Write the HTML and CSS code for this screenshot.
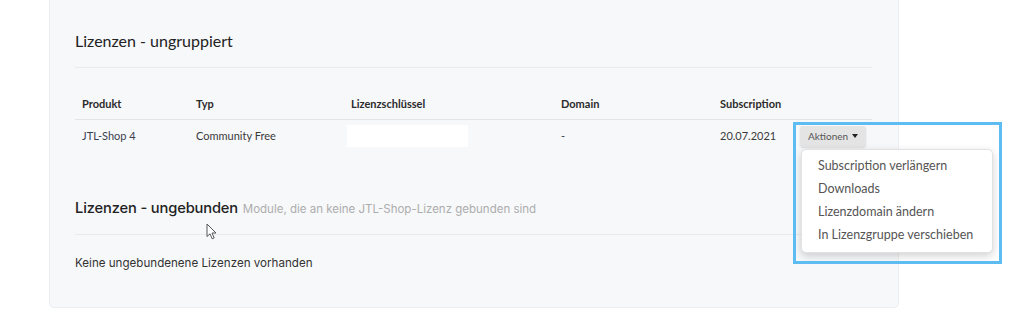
FILE: index.html
```html
<!DOCTYPE html>
<html lang="de">
<head>
<meta charset="utf-8">
<link rel="stylesheet" href="styles.css">
</head>
<body>
<div class="card">
  <section class="section">
    <h2 class="heading">Lizenzen - ungruppiert</h2>
    <table class="lic-table">
      <colgroup>
        <col class="c1"><col class="c2"><col class="c3"><col class="c4"><col class="c5"><col class="c6">
      </colgroup>
      <thead>
        <tr><th>Produkt</th><th>Typ</th><th>Lizenzschlüssel</th><th>Domain</th><th>Subscription</th><th></th></tr>
      </thead>
      <tbody>
        <tr>
          <td class="product">JTL-Shop 4</td>
          <td>Community Free</td>
          <td><span class="keybox"></span></td>
          <td>-</td>
          <td>20.07.2021</td>
          <td class="actions-cell">
            <div class="actions">
              <button class="btn-actions">Aktionen <span class="caret"></span></button>
              <ul class="dropdown">
                <li>Subscription verlängern</li>
                <li>Downloads</li>
                <li>Lizenzdomain ändern</li>
                <li>In Lizenzgruppe verschieben</li>
              </ul>
              <div class="highlight"></div>
            </div>
          </td>
        </tr>
      </tbody>
    </table>
  </section>
  <section class="section second">
    <h2 class="heading h-inter">Lizenzen - ungebunden <small class="sub">Module, die an keine JTL-Shop-Lizenz gebunden sind</small></h2>
    <p class="empty">Keine ungebundenene Lizenzen vorhanden</p>
    <svg class="cursor" width="12" height="18" viewBox="0 0 12 18"><path d="M1 1 L1 13.5 L4 10.8 L6.2 15.8 L8.2 14.9 L6 10 L10 10 Z" fill="#fff" stroke="#555" stroke-width="1" stroke-linejoin="round"/></svg>
  </section>
</div>
</body>
</html>
```

FILE: styles.css
```css
* { box-sizing: border-box; }
html, body { margin: 0; padding: 0; background: #fff; }
body { font-family: Lato, "Open Sans", sans-serif; color: #333; width: 1024px; height: 320px; overflow: hidden; }

.card {
  margin-left: 49px;
  width: 850px;
  height: 308px;
  background: #f7f8fa;
  border: 1px solid #ebedf0;
  border-top: none;
  border-radius: 0 0 5px 5px;
  padding: 0 26px 0 25px;
}

.section { position: relative; }

.heading {
  margin: 0;
  padding-top: 31px;
  padding-bottom: 16px;
  height: 68px;
  font-size: 16px;
  font-weight: 400;
  color: #222;
  line-height: 20px;
  border-bottom: 1px solid #e9ebee;
}

.lic-table {
  margin-top: 20px;
  width: 100%;
  border-collapse: collapse;
  table-layout: fixed;
  font-size: 11px;
}
.c1 { width: 114px; }
.c2 { width: 155px; }
.c3 { width: 210px; }
.c4 { width: 159px; }
.c5 { width: 80px; }

.lic-table th {
  text-align: left;
  font-weight: 700;
  color: #2b2b2b;
  padding: 9px 7px 8px;
  line-height: 14px;
  border-bottom: 1px solid #e3e5e8;
}
.lic-table td {
  padding: 0 7px;
  height: 33px;
  line-height: 14px;
  color: #3a3a3a;
  vertical-align: middle;
}
.lic-table td.product { color: #3b3f4f; }

.keybox {
  display: block;
  width: 121px;
  height: 22px;
  background: #fff;
  margin-left: -4px;
}

.actions-cell { padding: 0 0 0 7px !important; }
.actions { position: relative; }

.btn-actions {
  font-family: Lato, sans-serif;
  font-size: 10px;
  color: #555;
  background: #e4e4e4;
  border: none;
  border-radius: 3px;
  height: 21px;
  padding: 0 8px;
  box-shadow: 0 1px 2px rgba(0,0,0,0.12);
  display: inline-flex;
  align-items: center;
  gap: 4px;
}
.caret {
  display: inline-block;
  width: 0; height: 0;
  border-left: 3.5px solid transparent;
  border-right: 3.5px solid transparent;
  border-top: 4px solid #222;
  margin-top: -1px;
}

.dropdown {
  position: absolute;
  left: 1px;
  top: 23px;
  width: 192px;
  margin: 0;
  padding: 4px 0 6px;
  list-style: none;
  background: #fff;
  border: 1px solid #e2e2e2;
  border-radius: 5px;
  box-shadow: 0 3px 8px rgba(0,0,0,0.18);
  z-index: 2;
}
.dropdown li {
  padding: 0 16px;
  height: 23px;
  line-height: 23px;
  font-size: 12.5px;
  color: #555;
  white-space: nowrap;
}

.highlight {
  position: absolute;
  left: -7px;
  top: -4px;
  width: 209px;
  height: 142px;
  border: 3px solid #5dbdf3;
  z-index: 3;
  pointer-events: none;
}

.h-inter {
  font-family: Inter, sans-serif;
  font-size: 14.7px;
  font-weight: 500;
  letter-spacing: -0.15px;
  padding-top: 45px;
  padding-bottom: 0;
  height: 82px;
}
.sub {
  font-size: 11.5px;
  color: #adadad;
  font-weight: 400;
  letter-spacing: 0;
  margin-left: 1px;
}
.empty {
  margin: 20px 0 0;
  font-family: Inter, sans-serif;
  font-size: 11.6px;
  color: #333;
  line-height: 16px;
}

.cursor {
  position: absolute;
  left: 131px;
  top: 70px;
}
```
